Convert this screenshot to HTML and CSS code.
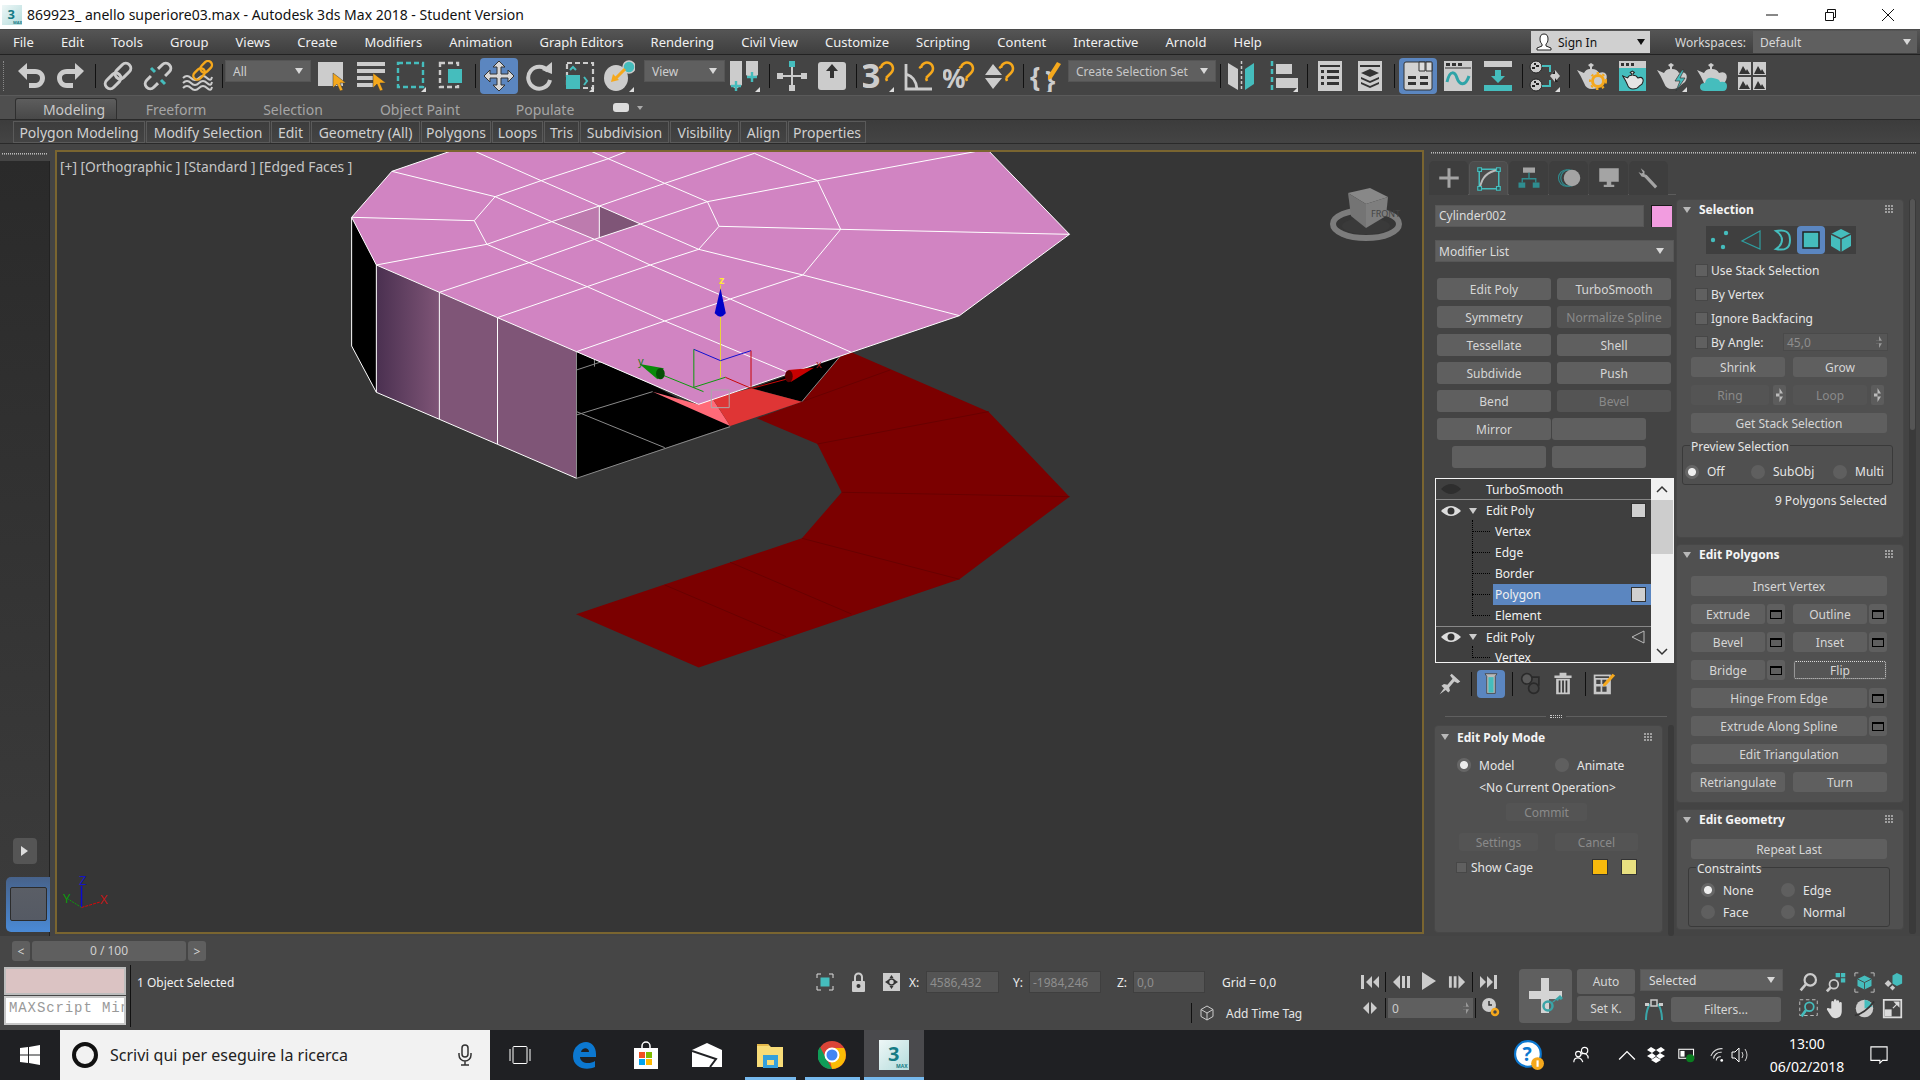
FILE: index.html
```html
<!DOCTYPE html>
<html lang="it">
<head>
<meta charset="utf-8">
<title>3ds Max 2018</title>
<link rel="stylesheet" href="styles.css">
</head>
<body>
<svg class="defs" aria-hidden="true"><defs>
<linearGradient id="maxg" x1="0" x2="1" y1="0" y2="1"><stop offset="0" stop-color="#eef7f7"/><stop offset="1" stop-color="#b4dcdc"/></linearGradient>
<symbol id="fly" viewBox="0 0 32 32"><path d="M31 32h-5l5-5z" fill="#ddd"/></symbol>
<symbol id="cur" viewBox="0 0 32 32"><path d="M18 13v15l4-4 3 7 3-1-3-7h6z" fill="#f5a81c" stroke="#3a3a3a" stroke-width=".5"/></symbol>
<symbol id="mag" viewBox="0 0 32 32"><path d="M18 8a6 6 0 1 1 10 5l-5 5M18 8l-2-1M23 18l1 3" fill="none" stroke="#f5a81c" stroke-width="2.5"/></symbol>
<symbol id="pot" viewBox="0 0 32 32"><path d="M1 10l7 3q2-4 6-4V7l-2-2 3-2 3 2-2 2v2q5 0 7 4 5-2 7 1t-1 8l-4 3q-3 4-9 4t-8-6Q5 16 1 10z" fill="#ccc"/></symbol>

<symbol id="undo" viewBox="0 0 32 32"><path d="M3 11l9-8v6h8c6 0 10 4 10 9s-4 10-10 10h-6v-5h6c3 0 5-2 5-5s-2-4-5-4h-8v6z" fill="#ccc"/></symbol>
<symbol id="redo" viewBox="0 0 32 32"><path transform="matrix(-1 0 0 1 32 0)" d="M3 11l9-8v6h8c6 0 10 4 10 9s-4 10-10 10h-6v-5h6c3 0 5-2 5-5s-2-4-5-4h-8v6z" fill="#ccc"/></symbol>
<symbol id="link" viewBox="0 0 32 32"><g transform="rotate(-45 16 16)" fill="none" stroke="#ccc" stroke-width="3"><rect x="0" y="11" width="18" height="10" rx="5"/><rect x="14" y="11" width="18" height="10" rx="5"/></g></symbol>
<symbol id="unlink" viewBox="0 0 32 32"><g transform="rotate(-45 16 16)" fill="none" stroke="#ccc" stroke-width="3"><path d="M11 11H5a5 5 0 000 10h6M21 11h6a5 5 0 010 10h-6"/></g><path d="M9 8l4 4M19 20l4 4" stroke="#45bdbd" stroke-width="3"/></symbol>
<symbol id="bind" viewBox="0 0 32 32"><g fill="none" stroke="#ccc" stroke-width="2"><path d="M1 18q4-4 8 0t8 0 8 0 5-1M1 23q4-4 8 0t8 0 8 0 5-1M1 28q4-4 8 0t8 0 8 0 5-1"/></g><g transform="rotate(-45 21 10)" fill="none" stroke="#f5a81c" stroke-width="2.4"><rect x="9" y="6" width="13" height="8" rx="4"/><rect x="19" y="6" width="13" height="8" rx="4"/></g></symbol>
<symbol id="select" viewBox="0 0 32 32"><rect x="3" y="2" width="25" height="24" fill="#ccc"/><use href="#cur"/></symbol>
<symbol id="byname" viewBox="0 0 32 32"><path d="M2 2h28v4H2zM2 9h28v4H2zM2 16h17v4H2zM2 23h17v4H2z" fill="#ccc"/><use href="#cur"/></symbol>
<symbol id="rect" viewBox="0 0 32 32"><rect x="3" y="3" width="25" height="24" fill="none" stroke="#45bdbd" stroke-width="2.4" stroke-dasharray="5 3"/><use href="#fly"/></symbol>
<symbol id="window" viewBox="0 0 32 32"><rect x="5" y="3" width="18" height="24" fill="none" stroke="#ccc" stroke-width="2.4" stroke-dasharray="5 3"/><rect x="13" y="9" width="14" height="14" fill="#45bdbd"/></symbol>
<symbol id="move" viewBox="0 0 32 32"><path d="M16 1l6 6h-4v7h7v-4l6 6-6 6v-4h-7v7h4l-6 6-6-6h4v-7H7v4l-6-6 6-6v4h7V7h-4z" fill="#d8d8d8" stroke="#333"/></symbol>
<symbol id="rotate" viewBox="0 0 32 32"><path d="M25 11A11 11 0 1 0 27 20" fill="none" stroke="#ccc" stroke-width="4"/><path d="M19 10L29 2v12z" fill="#ccc"/></symbol>
<symbol id="scale" viewBox="0 0 32 32"><rect x="4" y="3" width="26" height="25" fill="none" stroke="#ccc" stroke-width="2.2" stroke-dasharray="5 3"/><rect x="3" y="15" width="14" height="14" fill="#45bdbd"/><path d="M7 10l3-3 3 3M21 17l3 4-3 4" fill="none" stroke="#45bdbd" stroke-width="2"/><use href="#fly"/></symbol>
<symbol id="place" viewBox="0 0 32 32"><ellipse cx="13" cy="18" rx="12" ry="13" fill="#ccc"/><circle cx="26" cy="7" r="6" fill="#45bdbd" stroke="#ccc" stroke-width="1.5"/><path d="M22 9l-9 9" stroke="#f5a81c" stroke-width="3"/><path d="M8 22l2-8 6 6z" fill="#f5a81c"/><use href="#fly"/></symbol>
<symbol id="pivot" viewBox="0 0 32 32"><path d="M1 1h12v24l-6 4-6-4zM17 1h12v14l-6 4-6-4z" fill="#ccc"/><path d="M7 21v10M2 26h10M23 12v10M18 17h10" stroke="#45bdbd" stroke-width="2.4"/><use href="#fly"/></symbol>
<symbol id="manip" viewBox="0 0 32 32"><path d="M1 13h6v6H1zM25 13h6v6h-6zM13 25h6v6h-6z" fill="#ccc"/><rect x="13" y="1" width="6" height="6" fill="#45bdbd"/><path d="M7 16h18M16 7v18" stroke="#ccc" stroke-width="2"/></symbol>
<symbol id="kbd" viewBox="0 0 32 32"><rect x="2" y="2" width="28" height="28" rx="3" fill="#ccc"/><path d="M10 11l6-7 6 7h-4v7h-4v-7z" fill="#333"/></symbol>
<symbol id="snap3" viewBox="0 0 32 32"><text x="-2" y="28" class="gl gl-b">3</text><use href="#mag"/><use href="#fly"/></symbol>
<symbol id="angle" viewBox="0 0 32 32"><path d="M3 4v25h26M3 14q10 3 11 15" fill="none" stroke="#ccc" stroke-width="2.8"/><use href="#mag"/></symbol>
<symbol id="percent" viewBox="0 0 32 32"><text x="-1" y="28" class="gl gl-p">%</text><use href="#mag"/></symbol>
<symbol id="spinsnap" viewBox="0 0 32 32"><path d="M2 15L10 4l9 11zM2 18h17l-9 11z" fill="#ccc"/><use href="#mag"/></symbol>
<symbol id="named" viewBox="0 0 32 32"><text x="0" y="26" class="gl gl-b2">{</text><text x="15" y="30" class="gl gl-b2">}</text><path d="M27 2l4 2-9 14-4 2 0-4z" fill="#f5a81c"/></symbol>
<symbol id="mirror" viewBox="0 0 32 32"><path d="M1 3l10 6v21L1 24z" fill="#ccc"/><path d="M27 3l-9 6v21l9-6z" fill="#45bdbd"/><path d="M14.500 1v30" stroke="#ccc" stroke-width="1.500" stroke-dasharray="3 2"/></symbol>
<symbol id="align" viewBox="0 0 32 32"><path d="M5 1v30" stroke="#45bdbd" stroke-width="2.500" stroke-dasharray="5 3"/><path d="M9 4h16v10H9zM9 18h22v10H9z" fill="#ccc"/><use href="#fly"/></symbol>
<symbol id="layer" viewBox="0 0 32 32"><rect x="4" y="1" width="24" height="30" fill="#ccc"/><path d="M6 5h20v2H6zM7 10h3v3H7zM13 10h12v3H13zM7 16h3v3H7zM13 16h12v3H13zM7 22h3v3H7zM13 22h12v3H13z" fill="#333"/></symbol>
<symbol id="rstack" viewBox="0 0 32 32"><rect x="4" y="1" width="24" height="30" fill="#ccc"/><path d="M6 5h20v2H6zM16 9l9 4-9 4-9-4zM7 17l9 4 9-4v2l-9 4-9-4zM7 22l9 4 9-4v2l-9 4-9-4z" fill="#333"/></symbol>
<symbol id="ribbon" viewBox="0 0 32 32"><rect x="2" y="2" width="28" height="28" rx="2" fill="#d2d2d2" stroke="#333"/><path d="M17 2h6v9h-6zM24 2h6v9h-6z" fill="#ddd" stroke="#333"/><path d="M6 16h8v3H6zM18 16h8v3h-8zM6 22h8v3H6zM18 22h8v3h-8z" fill="#333"/></symbol>
<symbol id="curve" viewBox="0 0 32 32"><rect x="2" y="1" width="28" height="30" fill="#ccc"/><path d="M4 3h4v3H4zM10 3h4v3h-4zM16 3h4v3h-4z" fill="#333"/><path d="M3 8h26" stroke="#333"/><path d="M5 22c3-13 8-10 10-4s8 10 12-2" fill="none" stroke="#2fa4a8" stroke-width="3"/></symbol>
<symbol id="dope" viewBox="0 0 32 32"><path d="M2 1h28v6H2z" fill="#ccc"/><path d="M2 25h28v6H2zM13 10h6v6h4l-7 7-7-7h4z" fill="#45bdbd"/></symbol>
<symbol id="schem" viewBox="0 0 32 32"><circle cx="7" cy="7" r="6" fill="#ccc" stroke="#222"/><circle cx="7" cy="25" r="6" fill="#ccc" stroke="#222"/><path d="M5 3h2v2H5zM7 5h3v2H7zM3 7h3v2H3zM5 21h2v2H5zM7 23h3v2H7zM3 25h3v2H3z" fill="#222"/><path d="M13 6h8v6M13 26h8v-6" fill="none" stroke="#45bdbd" stroke-width="2"/><path d="M26 10l5 6-5 6-5-6z" fill="#ccc"/><path d="M26 10v4h-3zM26 18v4h3z" fill="#222"/><use href="#fly"/></symbol>
<symbol id="rsetup" viewBox="0 0 32 32"><use href="#pot"/><circle cx="22" cy="21" r="5.500" fill="none" stroke="#f5a81c" stroke-width="3"/><circle cx="22" cy="21" r="8" fill="none" stroke="#f5a81c" stroke-width="2" stroke-dasharray="2.500 3.500"/></symbol>
<symbol id="frame" viewBox="0 0 32 32"><rect x="3" y="1" width="27" height="30" fill="#45bdbd"/><path d="M3 1h27v7H3z" fill="#ccc"/><path d="M5 3h3v3H5zM10 3h3v3h-3zM15 3h3v3h-3z" fill="#333"/><svg x="6" y="9" width="22" height="22" viewBox="0 0 32 32"><path d="M1 10l7 3q2-4 6-4V7l-2-2 3-2 3 2-2 2v2q5 0 7 4 5-2 7 1t-1 8l-4 3q-3 4-9 4t-8-6Q5 16 1 10z" fill="#e4e4e4" stroke="#222" stroke-width="1.500"/></svg></symbol>
<symbol id="render" viewBox="0 0 32 32"><use href="#pot"/><path d="M26 10l-7 11h5l-4 10 9-13h-5l4-8z" fill="#45bdbd" stroke="#333" stroke-width=".7"/><use href="#fly"/></symbol>
<symbol id="cloud" viewBox="0 0 32 32"><use href="#pot"/><path d="M9 31q-5 0-5-4t5-4q1-6 8-5t7 4q7-1 7 4t-4 5z" fill="#45bdbd"/></symbol>
<symbol id="gallery" viewBox="0 0 32 32"><g fill="#ccc"><path d="M2 2h13v13H2zM17 2h13v13H17zM2 17h13v13H2zM17 17h13v13H17z"/></g><path d="M3 14l4-8 3 5 1-2 3 5zM18 14l4-8 3 5 1-2 3 5zM3 29l4-8 3 5 1-2 3 5zM18 29l4-8 3 5 1-2 3 5z" fill="#333"/></symbol>

<symbol id="t-plus" viewBox="0 0 32 32"><path d="M14 3h4v11h11v4H18v11h-4V18H3v-4h11z" fill="#a4a4a4"/></symbol>
<symbol id="t-mod" viewBox="0 0 32 32"><g fill="none" stroke="#45bdbd" stroke-width="2"><rect x="3" y="3" width="26" height="26"/><path d="M4 28C6 14 14 6 28 4" stroke="#bcbcbc" stroke-width="2.500"/></g><path d="M1 1h5v5H1zM26 1h5v5h-5zM1 26h5v5H1zM26 26h5v5h-5z" fill="#2b5a5a" stroke="#45bdbd" stroke-width="1.500"/></symbol>
<symbol id="t-hier" viewBox="0 0 32 32"><path d="M8 2h16v7H8z" fill="#a4a4a4"/><path d="M16 9v7M7 22v-5h18v5" fill="none" stroke="#2f8d90" stroke-width="1.800"/><path d="M2 22h9v7H2zM21 22h9v7h-9z" fill="#2f8d90"/></symbol>
<symbol id="t-mot" viewBox="0 0 32 32"><g fill="none" stroke="#2f8d90" stroke-width="1.500"><circle cx="13" cy="16" r="11"/><circle cx="16" cy="16" r="11"/></g><circle cx="20" cy="16" r="11" fill="#a4a4a4"/></symbol>
<symbol id="t-disp" viewBox="0 0 32 32"><path d="M3 3h26v18H3zM13 21h6v4h-6zM9 25h14v3H9z" fill="#a4a4a4"/></symbol>
<symbol id="t-util" viewBox="0 0 32 32"><path d="M5 3l5 4v4l3 1 14 15-3 3L10 15 6 14 2 8l4 2 2-1z" fill="#a4a4a4"/></symbol>

<symbol id="pin" viewBox="0 0 28 28"><path d="M16 2l10 9-3 2-4-2-6 7 1 4-2 2-8-8 3-2 4 1 6-7-3-4zM7 19l-5 7 7-5z" fill="#c8c8c8"/></symbol>
<symbol id="endres" viewBox="0 0 28 28"><path d="M7 2h14l-2 3v20h-10V5z" fill="#b9b9b9" stroke="#444"/><rect x="11" y="6" width="6" height="18" fill="#45bdbd"/></symbol>
<symbol id="uniq" viewBox="0 0 28 28"><g fill="none" stroke="#2a2a2a" stroke-width="2"><circle cx="8" cy="8" r="6"/><circle cx="16" cy="19" r="6"/><path d="M14 6h8v10"/></g><circle cx="8" cy="8" r="5" fill="#5a5a5a"/></symbol>
<symbol id="trash" viewBox="0 0 28 28"><path d="M4 4h20v3H4zM10 1h8v3h-8zM6 8h16v18H6z" fill="#c8c8c8"/><path d="M10 10v14M14 10v14M18 10v14" stroke="#333" stroke-width="2"/></symbol>
<symbol id="cfg" viewBox="0 0 28 28"><path d="M2 3h20v23H2z" fill="#c8c8c8"/><path d="M4 5h16v2H4zM5 9h5v5H5zM12 9h5v5h-5zM5 17h5v6H5zM12 17h5v6h-5z" fill="#444"/><path d="M24 2l3 2-11 12-3 1 0-3z" fill="#f5a81c"/></symbol>

<symbol id="lv-v" viewBox="0 0 28 28"><circle cx="6" cy="14" r="2.200" fill="#45bdbd"/><circle cx="19" cy="7" r="2.200" fill="#45bdbd"/><circle cx="16" cy="21" r="2.200" fill="#45bdbd"/></symbol>
<symbol id="lv-e" viewBox="0 0 28 28"><path d="M23 5v18L5 15z" fill="none" stroke="#2f9ea0" stroke-width="1.200"/></symbol>
<symbol id="lv-b" viewBox="0 0 28 28"><path d="M9 5q14-3 14 9t-14 9q6-4 6-9t-6-9z" fill="none" stroke="#45bdbd" stroke-width="2"/></symbol>
<symbol id="lv-p" viewBox="0 0 28 28"><rect x="6" y="6" width="16" height="16" fill="#45bdbd" stroke="#222" stroke-width="1.500"/></symbol>
<symbol id="lv-el" viewBox="0 0 28 28"><path d="M14 3l10 5v12l-10 6-10-6V8z" fill="#45bdbd"/><path d="M4 8l10 5 10-5M14 13v13" fill="none" stroke="#444" stroke-width="1.500"/></symbol>
</defs></svg>

<div class="app">
  <header class="titlebar">
    <svg class="logo" viewBox="0 0 20 20"><rect width="20" height="20" fill="url(#maxg)"/><text x="5.500" y="13.500" class="logo-n">3</text><text x="11" y="19" class="logo-m">MAX</text></svg>
    <span class="title">869923_ anello superiore03.max - Autodesk 3ds Max 2018 - Student Version</span>
    <div class="winbtns">
      <svg class="wb" viewBox="0 0 14 14"><path d="M1 7h12" stroke="#111"/></svg>
      <svg class="wb" viewBox="0 0 14 14"><path d="M2.500 4.500h8v8h-8zM4.500 4V1.500h8v8H11" fill="none" stroke="#111"/></svg>
      <svg class="wb wb-last" viewBox="0 0 14 14"><path d="M1 1l12 12M13 1L1 13" stroke="#111"/></svg>
    </div>
  </header>

  <nav class="menubar">
    <span>File</span><span>Edit</span><span>Tools</span><span>Group</span><span>Views</span><span>Create</span><span>Modifiers</span><span>Animation</span><span>Graph Editors</span><span>Rendering</span><span>Civil View</span><span>Customize</span><span>Scripting</span><span>Content</span><span>Interactive</span><span>Arnold</span><span>Help</span>
    <div class="menu-right">
      <div class="signin"><svg class="signin-i" viewBox="0 0 16 18"><path d="M8 1c3 0 4 2 4 5s-1 4-2 5v2l5 2v2H1v-2l5-2v-2C5 10 4 9 4 6s1-5 4-5z" fill="#fff" stroke="#222"/></svg><span class="signin-t">Sign In</span><i class="tri tri-dark"></i></div>
      <span class="ws-label">Workspaces:</span>
      <div class="ws-drop"><span>Default</span><i class="tri"></i></div>
    </div>
  </nav>

  <div class="toolbar">
    <i class="grip"></i>
    <span class="ti"><svg class="ic"><use href="#undo"/></svg></span>
    <span class="ti"><svg class="ic"><use href="#redo"/></svg></span>
    <i class="sep"></i>
    <span class="ti"><svg class="ic"><use href="#link"/></svg></span>
    <span class="ti"><svg class="ic"><use href="#unlink"/></svg></span>
    <span class="ti"><svg class="ic"><use href="#bind"/></svg></span>
    <i class="sep"></i>
    <div class="tdrop td-all"><span>All</span><i class="tri"></i></div>
    <span class="ti"><svg class="ic"><use href="#select"/></svg></span>
    <span class="ti"><svg class="ic"><use href="#byname"/></svg></span>
    <span class="ti"><svg class="ic"><use href="#rect"/></svg></span>
    <span class="ti"><svg class="ic"><use href="#window"/></svg></span>
    <i class="sep"></i>
    <span class="ti ti-on"><svg class="ic"><use href="#move"/></svg></span>
    <span class="ti"><svg class="ic"><use href="#rotate"/></svg></span>
    <span class="ti"><svg class="ic"><use href="#scale"/></svg></span>
    <span class="ti"><svg class="ic"><use href="#place"/></svg></span>
    <div class="tdrop td-view"><span>View</span><i class="tri"></i></div>
    <span class="ti"><svg class="ic"><use href="#pivot"/></svg></span>
    <i class="sep"></i>
    <span class="ti"><svg class="ic"><use href="#manip"/></svg></span>
    <span class="ti"><svg class="ic"><use href="#kbd"/></svg></span>
    <i class="sep"></i>
    <span class="ti"><svg class="ic"><use href="#snap3"/></svg></span>
    <span class="ti"><svg class="ic"><use href="#angle"/></svg></span>
    <span class="ti"><svg class="ic"><use href="#percent"/></svg></span>
    <span class="ti"><svg class="ic"><use href="#spinsnap"/></svg></span>
    <i class="sep"></i>
    <span class="ti"><svg class="ic"><use href="#named"/></svg></span>
    <div class="tdrop td-set"><span>Create Selection Set</span><i class="tri"></i></div>
    <i class="sep"></i>
    <span class="ti"><svg class="ic"><use href="#mirror"/></svg></span>
    <span class="ti"><svg class="ic"><use href="#align"/></svg></span>
    <i class="sep"></i>
    <span class="ti"><svg class="ic"><use href="#layer"/></svg></span>
    <span class="ti"><svg class="ic"><use href="#rstack"/></svg></span>
    <i class="sep"></i>
    <span class="ti ti-on"><svg class="ic"><use href="#ribbon"/></svg></span>
    <span class="ti"><svg class="ic"><use href="#curve"/></svg></span>
    <span class="ti"><svg class="ic"><use href="#dope"/></svg></span>
    <i class="sep"></i>
    <span class="ti"><svg class="ic"><use href="#schem"/></svg></span>
    <i class="sep"></i>
    <span class="ti"><svg class="ic"><use href="#rsetup"/></svg></span>
    <span class="ti"><svg class="ic"><use href="#frame"/></svg></span>
    <span class="ti"><svg class="ic"><use href="#render"/></svg></span>
    <span class="ti"><svg class="ic"><use href="#cloud"/></svg></span>
    <span class="ti"><svg class="ic"><use href="#gallery"/></svg></span>
  </div>

  <div class="rtabs">
    <span class="rtab rtab-on">Modeling</span>
    <span class="rtab rt-1">Freeform</span>
    <span class="rtab rt-2">Selection</span>
    <span class="rtab rt-3">Object Paint</span>
    <span class="rtab rt-4">Populate</span>
    <i class="rt-pill"></i><i class="rt-caret"></i>
  </div>
  <div class="rgroups">
    <span>Polygon Modeling</span><span>Modify Selection</span><span>Edit</span><span>Geometry (All)</span><span>Polygons</span><span>Loops</span><span>Tris</span><span>Subdivision</span><span>Visibility</span><span>Align</span><span>Properties</span>
  </div>

  <main class="main">
    <aside class="leftbar">
      <i class="lb-dots"></i>
      <div class="lb-body">
        <div class="lb-play"><i class="lb-arrow"></i></div>
        <div class="lb-slot"><i class="lb-inner"></i></div>
      </div>
    </aside>

    <section class="vp">
      <svg class="scene" viewBox="57 152 1365 780">
        <defs>
          <linearGradient id="wall" x1="0" x2="1" y1="0" y2="0"><stop offset="0" stop-color="#4a3050"/><stop offset="1" stop-color="#7f5577"/></linearGradient>
        </defs>
        <g transform="translate(340 150) scale(.4847 .3333)">
          <polygon points="1055,607 1338,785 1505,1040 1278,1288 740,1553 487,1393 953,1165 1035,1027 985,882 860,805 953,755 1030,622" fill="#7b0000"/>
          <g class="dk"><path d="M953 755L1135 660M985 882L1338 785M1035 1027L1505 1040M953 1165L1278 1288M805 1237L1055 1392M670 1305L920 1460"/></g>

          <polygon points="24,202 75,345 75,727 24,588" fill="#000"/>
          <polygon points="75,345 205,427 205,808 75,727" fill="url(#wall)"/>
          <polygon points="205,427 325,503 325,883 205,808" fill="#7f5577"/>
          <polygon points="325,503 488,605 488,985 325,883" fill="#7f5577"/>
          <g class="wl"><path d="M24 202V588L75 727V345M75 727L205 808 325 883 488 985V605M205 427V808M325 503V883"/></g>

          <polygon points="488,605 645,705 805,828 488,985" fill="#000"/>
          <polygon points="850,715 1030,622 953,755" fill="#000"/>
          <g class="gl-line"><path d="M488 985L805 830M488 795L645 725M488 785L670 893M488 660L540 635M525 625V650M1030 622L953 755"/></g>
          <polygon points="645,725 738,763 768,745 805,828" fill="#ff6a78"/>
          <polygon points="768,745 848,715 953,755 805,828" fill="#df3535"/>

          <polygon points="24,202 107,64 225,5 1340,5 1505,253 1278,497 1055,607 740,763 488,605 325,503 205,427 75,345" fill="#d184c2"/>
          <polygon points="437,215 535,168 535,263 525,268" fill="#bd7bae"/>
          <polygon points="535,168 620,222 535,263" fill="#7f5577"/>
          <g class="wl">
            <path d="M24 202L107 64 225 5M1340 5L1505 253 1278 497 1055 607 740 763 488 605 325 503 205 427 75 345 24 202"/>
            <path d="M107 64L320 140M25 202L277 212M75 345L303 283M1505 253L1033 238 782 229M1278 497L955 375 740 298M1310 5L985 92 758 155"/>
            <path d="M320 140L277 212 303 283M758 155L782 229 740 298M985 92L1033 238 955 375"/>
            <path d="M320 140L415 92 550 28 590 5M303 283L437 215 535 168 670 100 855 10M205 427L390 338 525 268 620 222 758 155M325 503L510 410 640 345 740 298M488 605L670 513 805 447 955 375"/>
            <path d="M280 5L415 92 535 168 620 222 740 298M320 140L437 215 525 268 640 345 805 447 1055 607M303 283L390 338 510 410 670 513 920 665M520 5L670 100 758 155M855 10L985 92M535 168V263"/>
          </g>

          <g class="gz">
            <path class="gz-y" d="M785 405V682"/>
            <path class="gz-b" d="M730 598L785 632 848 602"/>
            <path class="gz-g" d="M730 598V712L795 682M665 675L750 725"/>
            <path class="gz-r" d="M848 602V715L795 682M850 715L920 688"/>
            <rect class="gz-s" x="766" y="720" width="37" height="53"/>
          </g>
          <path d="M785 415L796 490Q785 510 773 490z" fill="#0000c8"/>
          <path d="M618 642L668 655 655 688z" fill="#0a8a0a"/>
          <ellipse cx="661" cy="671" rx="9" ry="17" fill="#064f06"/>
          <path d="M978 653L925 660 930 696z" fill="#c80000"/>
          <ellipse cx="926" cy="679" rx="8" ry="18" fill="#5a0000"/>
        </g>
        <text x="719" y="284" class="ax ax-z">z</text>
        <text x="638" y="365" class="ax ax-ty">y</text>
        <text x="816" y="368" class="ax ax-tx">x</text>

        <g class="tri-ax">
          <path class="ta-b" d="M81.500 907.500V886"/>
          <path class="ta-g" d="M81.500 907.500L68 899"/>
          <path class="ta-r" d="M81.500 907.500L100 902"/>
          <text x="79" y="885" class="ax ta-tz">Z</text>
          <text x="63" y="903" class="ax ta-ty">Y</text>
          <text x="100" y="904" class="ax ta-tx">X</text>
        </g>

        <ellipse cx="1366" cy="224" rx="33" ry="14" fill="none" stroke="#7c7c7c" stroke-width="6"/>
        <ellipse cx="1366" cy="226" rx="24" ry="8" fill="#3a3a3a"/>
        <polygon points="1348,193 1370,188 1388,197 1366,204" fill="#888"/>
        <polygon points="1348,193 1366,204 1366,228 1351,216" fill="#747474"/>
        <polygon points="1366,204 1388,197 1386,216 1366,228" fill="#7e7e7e"/>
        <text x="1371" y="217" class="vc-t">FRONT</text>
      </svg>
      <div class="vp-label">[+] [Orthographic ] [Standard ] [Edged Faces ]</div>
    </section>

    <aside class="cmd">
      <i class="dotline"></i>
      <div class="cmd-row">
        <div class="cmd-left">
          <div class="tabs">
            <span class="tab"><svg class="tab-i"><use href="#t-plus"/></svg></span>
            <span class="tab tab-on"><svg class="tab-i"><use href="#t-mod"/></svg></span>
            <span class="tab"><svg class="tab-i"><use href="#t-hier"/></svg></span>
            <span class="tab"><svg class="tab-i"><use href="#t-mot"/></svg></span>
            <span class="tab"><svg class="tab-i"><use href="#t-disp"/></svg></span>
            <span class="tab"><svg class="tab-i"><use href="#t-util"/></svg></span>
          </div>
          <div class="cl-in">
            <div class="name-row"><div class="field name">Cylinder002</div><i class="swatch"></i></div>
            <div class="field modlist"><span>Modifier List</span><i class="tri"></i></div>
            <div class="mods">
              <div class="mrow"><button class="b b-m">Edit Poly</button><button class="b b-m">TurboSmooth</button></div>
              <div class="mrow"><button class="b b-m">Symmetry</button><button class="b b-m off">Normalize Spline</button></div>
              <div class="mrow"><button class="b b-m">Tessellate</button><button class="b b-m">Shell</button></div>
              <div class="mrow"><button class="b b-m">Subdivide</button><button class="b b-m">Push</button></div>
              <div class="mrow"><button class="b b-m">Bend</button><button class="b b-m off">Bevel</button></div>
              <div class="mrow mrow-6"><button class="b b-m">Mirror</button><button class="b b-e"></button></div>
              <div class="mrow mrow-7"><button class="b b-e"></button><button class="b b-e"></button></div>
            </div>
            <div class="stack">
              <div class="st-list">
                <div class="st-top"><svg class="eye" viewBox="0 0 20 12"><path d="M0 6q10-10 20 0-10 10-20 0z" fill="#2e2e2e"/></svg><span class="st-name">TurboSmooth</span></div>
                <div class="st-head"><svg class="eye" viewBox="0 0 20 12"><path d="M0 6q10-10 20 0-10 10-20 0z" fill="#ddd"/><circle cx="10" cy="6" r="3.500" fill="#333"/></svg><i class="st-tri"></i><span class="st-lab">Edit Poly</span><i class="st-box"></i></div>
                <div class="subs">
                  <div class="sub"><span>Vertex</span></div>
                  <div class="sub"><span>Edge</span></div>
                  <div class="sub"><span>Border</span></div>
                  <div class="sub"><span class="st-sel">Polygon<i class="st-box"></i></span></div>
                  <div class="sub"><span>Element</span></div>
                </div>
                <div class="st-head st-line"><svg class="eye" viewBox="0 0 20 12"><path d="M0 6q10-10 20 0-10 10-20 0z" fill="#ddd"/><circle cx="10" cy="6" r="3.500" fill="#333"/></svg><i class="st-tri"></i><span class="st-lab">Edit Poly</span><svg class="st-sub" viewBox="0 0 14 14"><path d="M13 1v12L1 7z" fill="none" stroke="#bbb"/></svg></div>
                <div class="subs"><div class="sub"><span>Vertex</span></div></div>
              </div>
              <div class="st-scroll">
                <svg class="st-ar" viewBox="0 0 22 21"><path d="M6 13l5-5 5 5" fill="none" stroke="#333" stroke-width="1.500"/></svg>
                <i class="st-thumb"></i>
                <svg class="st-ar st-ar-b" viewBox="0 0 22 21"><path d="M6 8l5 5 5-5" fill="none" stroke="#333" stroke-width="1.500"/></svg>
              </div>
            </div>
            <div class="stools">
              <svg class="sti st-pin"><use href="#pin"/></svg><i class="sep st-s1"></i>
              <span class="sti-on"><svg class="sti"><use href="#endres"/></svg></span><i class="sep st-s2"></i>
              <svg class="sti st-uni"><use href="#uniq"/></svg>
              <svg class="sti st-tr"><use href="#trash"/></svg><i class="sep st-s3"></i>
              <svg class="sti st-cfg"><use href="#cfg"/></svg>
            </div>
            <div class="divider"><i></i><b></b><i></i></div>
          </div>
          <div class="epm-row">
            <section class="roll epm">
              <div class="rhead"><i class="rtri"></i><span>Edit Poly Mode</span><i class="rgrip"></i></div>
              <div class="radios epm-r"><label class="rad rad-on">Model</label><label class="rad">Animate</label></div>
              <div class="nocur">&lt;No Current Operation&gt;</div>
              <button class="b off b-commit">Commit</button>
              <div class="epm-b"><button class="b off b-set">Settings</button><button class="b off b-can">Cancel</button></div>
              <div class="cage"><i class="cb cb-s"></i><span>Show Cage</span><i class="sw sw-1"></i><i class="sw sw-2"></i></div>
            </section>
            <i class="track"></i>
          </div>
        </div>

        <div class="cmd-right">
          <div class="rolls">
            <section class="roll r-sel">
              <div class="rhead"><i class="rtri"></i><span>Selection</span><i class="rgrip"></i></div>
              <div class="levels">
                <svg class="lv"><use href="#lv-v"/></svg><svg class="lv"><use href="#lv-e"/></svg><svg class="lv"><use href="#lv-b"/></svg>
                <span class="lv-on"><svg class="lv"><use href="#lv-p"/></svg></span><svg class="lv"><use href="#lv-el"/></svg>
              </div>
              <div class="checks">
                <div class="chk"><i class="cb"></i><span>Use Stack Selection</span></div>
                <div class="chk"><i class="cb"></i><span>By Vertex</span></div>
                <div class="chk"><i class="cb"></i><span>Ignore Backfacing</span></div>
                <div class="chk"><i class="cb"></i><span>By Angle:</span><div class="spin"><span>45,0</span><i class="spin-a"></i></div></div>
              </div>
              <div class="btns btns-s">
                <div class="br"><button class="b fl">Shrink</button><button class="b fl">Grow</button></div>
                <div class="br"><button class="b off b-ring">Ring</button><i class="mini"></i><button class="b off b-loop">Loop</button><i class="mini"></i></div>
                <button class="b bw">Get Stack Selection</button>
              </div>
              <div class="group g-prev"><span class="legend">Preview Selection</span>
                <div class="radios prev-r"><label class="rad rad-on">Off</label><label class="rad">SubObj</label><label class="rad">Multi</label></div>
              </div>
              <div class="count">9 Polygons Selected</div>
            </section>

            <section class="roll r-pol">
              <div class="rhead"><i class="rtri"></i><span>Edit Polygons</span><i class="rgrip"></i></div>
              <div class="btns btns-p">
                <button class="b bw">Insert Vertex</button>
                <div class="br"><button class="b b-h">Extrude</button><button class="b sq"><i></i></button><button class="b b-h">Outline</button><button class="b sq"><i></i></button></div>
                <div class="br"><button class="b b-h">Bevel</button><button class="b sq"><i></i></button><button class="b b-h">Inset</button><button class="b sq"><i></i></button></div>
                <div class="br"><button class="b b-h">Bridge</button><button class="b sq"><i></i></button><button class="b fl b-flip">Flip</button></div>
                <div class="br br-t"><button class="b fl">Hinge From Edge</button><button class="b sq"><i></i></button></div>
                <div class="br br-t"><button class="b fl">Extrude Along Spline</button><button class="b sq"><i></i></button></div>
                <button class="b bw">Edit Triangulation</button>
                <div class="br"><button class="b fl">Retriangulate</button><button class="b fl">Turn</button></div>
              </div>
            </section>

            <section class="roll r-geo">
              <div class="rhead"><i class="rtri"></i><span>Edit Geometry</span><i class="rgrip"></i></div>
              <button class="b bw b-rep">Repeat Last</button>
              <div class="group g-con"><span class="legend">Constraints</span>
                <div class="radios con-r"><label class="rad rad-on">None</label><label class="rad">Edge</label></div>
                <div class="radios con-r"><label class="rad">Face</label><label class="rad">Normal</label></div>
              </div>
            </section>
          </div>
          <div class="track track-r"><i class="thumb"></i></div>
        </div>
      </div>
    </aside>
  </main>

  <footer class="bottom">
    <div class="b-left">
      <div class="slider"><button class="b sl-b">&lt;</button><div class="sl-t">0 / 100</div><button class="b sl-b">&gt;</button></div>
      <div class="listener">
        <div class="ls-col"><div class="ls-pink"></div><div class="ls-white">MAXScript Mini</div></div>
        <i class="ls-sep"></i>
        <span class="status">1 Object Selected</span>
      </div>
    </div>
    <div class="b-coords">
      <div class="co-row">
        <svg class="co-i1" viewBox="0 0 18 18"><path d="M1 5V1h4M13 1h4v4M17 13v4h-4M5 17H1v-4" fill="none" stroke="#ddd"/><rect x="4.500" y="4.500" width="9" height="9" fill="#45bdbd"/></svg>
        <svg class="co-i2" viewBox="0 0 15 20"><path d="M4 9V5a3.500 3.500 0 017 0v4" fill="none" stroke="#ccc" stroke-width="2"/><rect x="1" y="9" width="13" height="11" rx="1" fill="#ccc"/><circle cx="7.500" cy="14" r="2" fill="#333"/></svg>
        <svg class="co-i3" viewBox="0 0 17 18"><rect width="17" height="18" fill="#ccc"/><path d="M8.500 2l2 3h-4zM8.500 16l2-3h-4zM2 9l3-2v4zM15 9l-3-2v4z" fill="#333"/><circle cx="8.500" cy="9" r="3" fill="none" stroke="#333" stroke-width="1.500"/></svg>
        <span class="co-l co-x">X:</span><div class="co-f co-f1">4586,432</div>
        <span class="co-l co-y">Y:</span><div class="co-f">-1984,246</div>
        <span class="co-l co-z">Z:</span><div class="co-f">0,0</div>
        <span class="grid">Grid = 0,0</span>
      </div>
      <div class="tag-row">
        <i class="tag-sep"></i>
        <svg class="tag-i" viewBox="0 0 16 16"><path d="M8 1l6 3.500v7L8 15l-6-3.500v-7zM2 4.500L8 8l6-3.500M8 8v7" fill="none" stroke="#ccc"/></svg>
        <span>Add Time Tag</span>
      </div>
    </div>
    <div class="b-play">
      <div class="pl-row">
        <svg class="pl-1" viewBox="0 0 20 16"><path d="M1 1h3v14H1zM12 2v12L6 8zM19 2v12l-6-6z" fill="#ccc"/></svg>
        <i class="pl-sep pl-s1"></i>
        <svg class="pl-2" viewBox="0 0 19 16"><path d="M8 1v14L1 8zM10 2h3v12h-3zM15 2h3v12h-3z" fill="#ccc"/></svg>
        <svg class="pl-3" viewBox="0 0 16 22"><path d="M1 1l14 9-14 9z" fill="#ccc"/></svg>
        <svg class="pl-4" viewBox="0 0 19 16"><path d="M1 2h3v12H1zM6 2h3v12H6zM11 1v14l7-7z" fill="#ccc"/></svg>
        <i class="pl-sep pl-s2"></i>
        <svg class="pl-5" viewBox="0 0 18 16"><path d="M1 2v12l6-6zM8 2v12l6-6zM15 1h3v14h-3z" fill="#ccc"/></svg>
      </div>
      <div class="pl-row2">
        <svg class="pl-a" viewBox="0 0 16 14"><path d="M7 1v12L1 7zM9 1v12l6-6z" fill="#ccc"/></svg>
        <i class="pl-sep pl-s3"></i>
        <div class="pl-f"><span>0</span><i class="spin-a"></i></div>
        <i class="pl-sep pl-s4"></i>
        <svg class="pl-t" viewBox="0 0 18 20"><circle cx="7" cy="7" r="7" fill="#ccc"/><path d="M7 3v4h3" fill="none" stroke="#333" stroke-width="1.500"/><circle cx="13" cy="14" r="3" fill="none" stroke="#f5a81c" stroke-width="2.500"/></svg>
      </div>
    </div>
    <div class="b-key"><svg class="key-i" viewBox="0 0 36 38"><path d="M13 1h8v13h13v8H21v14h-8V22H1v-8h12z" fill="#d4d4d4"/><circle cx="20" cy="29" r="4.500" fill="none" stroke="#3aa5a8" stroke-width="2.500"/><path d="M23 26l9-8 3 3-2 2-2-1-1 2-2-1-2 2" fill="#3aa5a8"/></svg></div>
    <div class="b-auto"><button class="b">Auto</button><button class="b">Set K.</button></div>
    <div class="b-sel">
      <div class="field sel-d"><span>Selected</span><i class="tri"></i></div>
      <div class="sel-r">
        <svg class="sel-i" viewBox="0 0 24 24"><path d="M4 22C4 12 8 6 8 6M20 22c0-10-4-16-4-16" fill="none" stroke="#3aa5a8" stroke-width="2"/><rect x="9" y="2" width="6" height="6" fill="none" stroke="#ccc" stroke-width="1.500"/><path d="M3 5h4v3H3zM17 5h4v3h-4z" fill="#ccc"/></svg>
        <button class="b b-fil">Filters...</button>
      </div>
    </div>
    <div class="b-nav">
      <svg class="nv" viewBox="0 0 24 24"><circle cx="14" cy="9" r="6.500" fill="none" stroke="#ccc" stroke-width="2.500"/><path d="M9 14l-6 7" stroke="#ccc" stroke-width="3"/></svg>
      <svg class="nv" viewBox="0 0 24 24"><circle cx="9" cy="14" r="5" fill="none" stroke="#ccc" stroke-width="2"/><path d="M5 18l-4 4" stroke="#ccc" stroke-width="3"/><path d="M11 1h5v5h-5zM17 1h5v5h-5zM17 7h5v5h-5z" fill="#45bdbd"/></svg>
      <svg class="nv" viewBox="0 0 24 24"><path d="M1 5V1h4M19 1h4v4M23 19v4h-4M5 23H1v-4" fill="none" stroke="#ccc"/><path d="M12 4l8 4v8l-8 4-8-4V8z" fill="#45bdbd"/><path d="M4 8l8 4 8-4M12 12v8" fill="none" stroke="#444"/></svg>
      <svg class="nv" viewBox="0 0 24 24"><path d="M17 1l6 3v9l-6 3-5-3V4z" fill="#45bdbd"/><path d="M7 9l4 4-4 4-4-4zM12 15l3 3-3 3-3-3z" fill="#ccc"/></svg>
      <svg class="nv" viewBox="0 0 24 24"><rect x="2" y="2" width="20" height="18" fill="none" stroke="#ccc" stroke-dasharray="4 3"/><circle cx="13" cy="10" r="5" fill="none" stroke="#45bdbd" stroke-width="2"/><path d="M9 14l-5 7" stroke="#45bdbd" stroke-width="3"/></svg>
      <svg class="nv" viewBox="0 0 24 24"><path d="M6 12V5a1.500 1.500 0 013 0v-2a1.500 1.500 0 013 0v1a1.500 1.500 0 013 0v2a1.500 1.500 0 013 0v9c0 5-3 8-7 8s-5-2-7-5l-3-5c0-2 2-2 3-1z" fill="#ddd"/></svg>
      <svg class="nv" viewBox="0 0 24 24"><circle cx="12" cy="12" r="10" fill="#ccc"/><path d="M12 2a10 10 0 019 8l-9 2z" fill="#45bdbd"/><path d="M1 20Q12 18 23 4" fill="none" stroke="#333" stroke-width="2"/></svg>
      <svg class="nv" viewBox="0 0 24 24"><path d="M2 2h20v20H2z" fill="none" stroke="#ddd" stroke-width="2"/><path d="M3 13h8v8H3z" fill="#ddd"/><path d="M20 4v7l-3-3-4 4-1-1 4-4-3-3z" fill="#ddd"/></svg>
    </div>
  </footer>

  <div class="taskbar">
    <span class="tk-start"><svg class="win" viewBox="0 0 20 20"><path d="M0 3l8-1v7.500H0zM9 2l11-2v9.500H9zM0 10.500h8V18l-8-1zM9 10.500h11V20l-11-2z" fill="#fff"/></svg></span>
    <div class="tk-search">
      <i class="cortana"></i>
      <span>Scrivi qui per eseguire la ricerca</span>
      <svg class="mic" viewBox="0 0 14 22"><rect x="4" y="1" width="6" height="12" rx="3" fill="none" stroke="#333" stroke-width="1.500"/><path d="M1 9v2a6 6 0 0012 0V9M7 17v4M3 21h8" fill="none" stroke="#333" stroke-width="1.500"/></svg>
    </div>
    <span class="tk tk-w60"><svg class="tk-i tk-view" viewBox="0 0 24 18"><rect x="5" y=".5" width="14" height="17" rx="1" fill="none" stroke="#fff"/><path d="M2 3v12M22 3v12" stroke="#fff"/></svg></span>
    <span class="tk tk-w68"><svg class="tk-i" viewBox="0 0 26 28"><path d="M2 15C2 6 9 1 15 1c6 0 10 5 10 12v3H9c0 6 9 8 15 4v6c-9 4-22 1-22-11zm8-4h8c0-5-7-5-8 0z" fill="#0c78d0"/></svg></span>
    <span class="tk tk-w56"><svg class="tk-i" viewBox="0 0 24 28"><path d="M8 8V5a4 4 0 018 0v3" fill="none" stroke="#fff" stroke-width="1.500"/><rect y="7" width="24" height="21" fill="#fff"/><path d="M5 11h6v6H5z" fill="#f25022"/><path d="M12 11h6v6h-6z" fill="#7fba00"/><path d="M5 18h6v6H5z" fill="#00a4ef"/><path d="M12 18h6v6h-6z" fill="#ffb900"/></svg></span>
    <span class="tk tk-w66"><svg class="tk-i tk-mail" viewBox="0 0 30 24"><path d="M0 7l15-7 15 7v17H0z" fill="#fff"/><path d="M0 8l24 8-6 8" fill="none" stroke="#202124" stroke-width="2"/></svg></span>
    <span class="tk tk-w60 tk-run"><svg class="tk-i" viewBox="0 0 28 26"><path d="M1 2h11l3 3h12v20H1z" fill="#f8dc78"/><path d="M1 2h11l1 2H1z" fill="#e4b84a"/><rect x="7" y="13" width="15" height="13" fill="#34a0dc"/><rect x="11" y="18" width="7" height="5" fill="#f8dc78"/></svg></span>
    <span class="tk tk-w64 tk-run"><svg class="tk-i" viewBox="0 0 28 28"><circle cx="14" cy="14" r="14" fill="#db4437"/><path d="M14 28a14 14 0 0012-21H14l-3 8z" fill="#fbbc05"/><path d="M2 6l7 13 5 9A14 14 0 012 6z" fill="#0f9d58"/><circle cx="14" cy="14" r="6.500" fill="#4285f4" stroke="#fff" stroke-width="2"/></svg></span>
    <span class="tk tk-w60 tk-run tk-act"><svg class="tk-i tk-max" viewBox="0 0 30 30"><rect width="30" height="30" fill="url(#maxg)"/><text x="9" y="21" class="logo-n2">3</text><text x="17" y="28" class="logo-m2">MAX</text></svg></span>
    <div class="tray">
      <span class="tr tr-48"><svg class="tr-i tr-help" viewBox="0 0 28 28"><circle cx="13" cy="13" r="12" fill="#fff" stroke="#0c78d0" stroke-width="2"/><text x="8" y="20" class="help-q">?</text><circle cx="22" cy="22" r="6" fill="#f5a81c"/><path d="M22 19v6" stroke="#fff" stroke-width="2"/></svg></span>
      <span class="tr tr-56"><svg class="tr-i" viewBox="0 0 20 20"><circle cx="14" cy="5" r="3.500" fill="none" stroke="#fff" stroke-width="1.300"/><circle cx="7" cy="9" r="3" fill="none" stroke="#fff" stroke-width="1.300"/><path d="M2 18c0-6 8-7 10 0M10 9c4-2 8 0 8 5" fill="none" stroke="#fff" stroke-width="1.300"/></svg></span>
      <span class="tr tr-36"><svg class="tr-i" viewBox="0 0 16 10"><path d="M1 9l7-7 7 7" fill="none" stroke="#fff" stroke-width="1.200"/></svg></span>
      <span class="tr tr-22"><svg class="tr-i" viewBox="0 0 18 18"><path d="M4 1l5 3-4 3-5-3zM14 1l4 3-5 3-4-3zM5 7l4 3-4 3-5-3zM13 7l5 3-5 3-4-3zM4 14l5-3 5 3-5 3z" fill="#fff"/></svg></span>
      <span class="tr tr-40"><svg class="tr-i" viewBox="0 0 22 20"><rect x="1" y="3" width="18" height="11" fill="none" stroke="#fff" stroke-width="1.300"/><rect x="3" y="5" width="5" height="7" fill="#fff"/><circle cx="15" cy="14" r="5" fill="#0a7d20"/></svg></span>
      <span class="tr tr-24"><svg class="tr-i" viewBox="0 0 20 18"><path d="M1 10a12 12 0 0113-8M4 13a8 8 0 019-7M7 15a4 4 0 015-4" fill="none" stroke="#ddd" stroke-width="1.200"/><circle cx="13" cy="15" r="1.500" fill="#fff"/></svg></span>
      <span class="tr tr-18"><svg class="tr-i" viewBox="0 0 18 18"><path d="M1 6h3l4-4v14l-4-4H1z" fill="none" stroke="#fff"/><path d="M11 6q2 3 0 6M14 3q4 6 0 12" fill="none" stroke="#ccc"/></svg></span>
      <div class="clock"><span>13:00</span><span>06/02/2018</span></div>
      <span class="tr tr-28"><svg class="tr-i" viewBox="0 0 20 20"><path d="M1 1h18v15h-5l-3 3v-3H1z" fill="none" stroke="#fff" stroke-width="1.200"/></svg></span>
    </div>
  </div>
</div>
</body>
</html>
```

FILE: styles.css
```css
* { box-sizing: border-box; }
html, body { margin: 0; padding: 0; }
body { width: 1920px; height: 1080px; overflow: hidden; background: #444; font: 12px "Noto Sans", "Open Sans", sans-serif; color: #e2e2e2; }
.defs { position: absolute; width: 0; height: 0; }
i { display: block; flex: none; }
svg { display: block; flex: none; }
button { font: inherit; margin: 0; padding: 0; border: 0; }
.app { width: 1920px; height: 1080px; display: flex; flex-direction: column; }

/* title */
.titlebar { height: 29px; background: #fff; display: flex; align-items: center; padding-left: 2px; flex: none; }
.logo { width: 20px; height: 20px; margin-right: 5px; }
.logo-n { font: 700 13px "Noto Sans", sans-serif; fill: #167b85; }
.logo-m { font: 700 4px "Noto Sans", sans-serif; fill: #167b85; }
.title { font: 14px "Noto Sans", sans-serif; color: #111; white-space: nowrap; }
.winbtns { margin-left: auto; display: flex; align-items: center; padding-right: 25px; gap: 44px; }
.wb { width: 14px; height: 14px; }

/* menu */
.menubar { height: 26px; flex: none; display: flex; align-items: center; gap: 27.100px; padding: 0 0 1px 13px; background: linear-gradient(#555, #3e3e3e); border-top: 1px solid #4b4b4b; border-bottom: 1px solid #222; font-size: 13px; color: #f0f0f0; white-space: nowrap; }
.menu-right { margin-left: auto; display: flex; align-items: center; font-size: 12px; height: 22px; margin-top: 1px; }
.signin { width: 119px; height: 22px; background: #d0d0d0; color: #111; display: flex; align-items: center; padding: 0 5px; }
.signin-i { width: 16px; height: 18px; margin-right: 6px; }
.signin .tri { margin-left: auto; }
.ws-label { margin-left: 25px; width: 80px; color: #d8d8d8; }
.ws-drop { width: 164px; height: 22px; background: #5f5f5f; display: flex; align-items: center; padding: 0 6px 0 7px; color: #d8d8d8; margin-left: -2px; margin-right: 3px; }
.ws-drop .tri { margin-left: auto; }
.tri { width: 0; height: 0; border-left: 4px solid transparent; border-right: 4px solid transparent; border-top: 6px solid #d8d8d8; }
.tri-dark { border-top-color: #111; }

/* toolbar */
.toolbar { height: 41px; flex: none; background: #444; border-bottom: 1px solid #5a5a5a; display: flex; align-items: center; padding: 2px 0 0 3px; white-space: nowrap; position: relative; }
.grip { width: 2px; height: 30px; margin-right: 6px; border-left: 1px dotted #888; }
.ti { width: 40px; height: 36px; display: flex; align-items: center; justify-content: center; flex: none; }
.ti-on { width: 38px; background: #5b86c0; border-radius: 4px; margin-left: 2px; margin-right: 1px; }
.ic { width: 32px; height: 32px; overflow: visible; }
.sep { width: 7px; height: 24px; flex: none; position: relative; }
.sep::after { content: ""; position: absolute; left: 4px; top: 0; bottom: 0; width: 1px; background: #111; }
.gl { fill: #ccc; font-family: "Noto Sans", sans-serif; }
.gl-b { font-size: 34px; font-weight: 700; }
.gl-p { font-size: 26px; font-weight: 700; }
.gl-b2 { font-size: 26px; font-weight: 700; }
.tdrop { height: 22px; background: #5f5f5f; color: #cfcfcf; display: flex; align-items: center; justify-content: space-between; padding: 0 7px; margin-top: -10px; flex: none; border: 1px solid #555; }
.td-all { width: 86px; }
.td-view { width: 81px; margin-left: 5px; }
.td-set { width: 148px; margin-left: 2px; color: #c8c8c8; }

/* ribbon */
.rtabs { height: 24px; flex: none; background: #4f4f4f; border-bottom: 1px solid #2a2a2a; display: flex; align-items: flex-end; padding-left: 15px; font-size: 14px; color: #a5a5a5; white-space: nowrap; }
.rtab { height: 20px; display: flex; align-items: center; justify-content: center; flex: none; }
.rtab-on { width: 102px; height: 21px; padding-left: 16px; color: #c8c8c8; background: linear-gradient(#5d5d5d, #484848); border: 1px solid #2f2f2f; border-bottom: 0; border-radius: 3px 3px 0 0; }
.rt-1 { width: 118px; } .rt-2 { width: 116px; } .rt-3 { width: 138px; } .rt-4 { width: 112px; }
.rt-pill { width: 16px; height: 9px; background: #ddd; border-radius: 3px; margin: 0 0 7px 12px; }
.rt-caret { width: 0; height: 0; border-left: 3px solid transparent; border-right: 3px solid transparent; border-top: 4px solid #aaa; margin: 0 0 9px 8px; }
.rgroups { height: 24px; flex: none; background: linear-gradient(#3c3c3c, #444); border-bottom: 1px solid #2a2a2a; display: flex; gap: 1px; padding: 1px 0 0 13px; font-size: 14px; color: #d0d0d0; white-space: nowrap; }
.rgroups span { height: 22px; border: 1px solid #5a5a5a; display: flex; align-items: center; justify-content: center; flex: none; }
.rgroups span:nth-child(1) { width: 132px; }
.rgroups span:nth-child(2) { width: 124px; }
.rgroups span:nth-child(3) { width: 39px; }
.rgroups span:nth-child(4) { width: 109px; }
.rgroups span:nth-child(5) { width: 70px; }
.rgroups span:nth-child(6) { width: 51px; }
.rgroups span:nth-child(7) { width: 35px; }
.rgroups span:nth-child(8) { width: 89px; }
.rgroups span:nth-child(9) { width: 69px; }
.rgroups span:nth-child(10) { width: 47px; }
.rgroups span:nth-child(11) { width: 78px; }

/* main */
.main { height: 792px; flex: none; display: flex; }
.leftbar { width: 55px; flex: none; display: flex; flex-direction: column; }
.lb-dots { height: 2px; margin: 9px 8px 0 2px; border-top: 1px dotted #bbb; border-bottom: 1px dotted #888; }
.lb-body { width: 50px; flex: 1; margin-top: 6px; background: linear-gradient(#2a2a2a, #3c3c3c); border-right: 1px solid #222; display: flex; flex-direction: column; align-items: center; justify-content: flex-end; padding-bottom: 4px; }
.lb-play { width: 24px; height: 26px; background: #555; border-radius: 4px; display: flex; align-items: center; justify-content: center; margin-bottom: 13px; }
.lb-arrow { width: 0; height: 0; border-left: 7px solid #ddd; border-top: 5px solid transparent; border-bottom: 5px solid transparent; }
.lb-slot { width: 44px; height: 55px; margin-left: 6px; background: linear-gradient(#47628a, #4a8ad6); border-radius: 5px 0 0 5px; padding: 10px 3px 10px 4px; }
.lb-inner { width: 37px; height: 34px; background: linear-gradient(#5a5e66, #555a64); border: 1px solid #2c2c2c; border-radius: 2px; }

.vp { width: 1369px; height: 784px; margin-top: 6px; flex: none; border: 2px solid #7a6530; background: #363636; position: relative; overflow: hidden; }
.scene { width: 1365px; height: 780px; }
.wl path { fill: none; stroke: #fff; stroke-width: 1; vector-effect: non-scaling-stroke; }
.dk path { fill: none; stroke: #690000; stroke-width: 1; vector-effect: non-scaling-stroke; }
.gl-line path { fill: none; stroke: #8a8a8a; stroke-width: 1; vector-effect: non-scaling-stroke; }
.gz path, .gz rect { fill: none; stroke-width: 1; vector-effect: non-scaling-stroke; }
.gz-y { stroke: #e8d43a; } .gz-b { stroke: #1010d0; } .gz-g { stroke: #0c9a0c; } .gz-r { stroke: #c80808; } .gz-s { stroke: #aaa; }
.ax { font: 11px "Noto Sans", sans-serif; }
.ax-z { fill: #ffe838; font-weight: 700; } .ax-ty { fill: #177a17; } .ax-tx { fill: #a01f1f; }
.ta-b { stroke: #0a0ad0; fill: none; stroke-width: 1.500; } .ta-g { stroke: #0c9a0c; fill: none; stroke-dasharray: 2 1; } .ta-r { stroke: #d80808; fill: none; stroke-dasharray: 3 1; }
.tri-ax .ax { font-size: 13px; }
.ta-tz { fill: #1414c8; } .ta-ty { fill: #0c9a0c; } .ta-tx { fill: #c01818; }
.vc-t { font: 9px "Noto Sans", sans-serif; fill: #444; }
.vp-label { position: absolute; left: 3px; top: 5px; font-size: 13.800px; color: #c6c6c6; white-space: nowrap; }

/* command panel */
.cmd { width: 496px; flex: none; display: flex; flex-direction: column; padding-left: 5px; }
.dotline { height: 2px; margin: 8px 4px 0 2px; border-top: 1px dotted #bbb; border-bottom: 1px dotted #888; flex: none; }
.cmd-row { display: flex; flex: 1; min-height: 0; }
.cmd-left { width: 247px; flex: none; margin-top: 7px; display: flex; flex-direction: column; }
.tabs { height: 34px; display: flex; gap: 1px; flex: none; border-bottom: 1px solid #5c5c5c; }
.tab { width: 39px; height: 34px; background: #3e3e3e; border-radius: 5px 5px 0 0; display: flex; align-items: center; justify-content: center; }
.tab-on { background: #4c4c4c; border: 1px solid #555; border-bottom: 0; }
.tab-i { width: 24px; height: 24px; }
.cl-in { padding-left: 6px; }
.name-row { display: flex; gap: 7px; margin-top: 10px; }
.field { background: #5f5f5f; color: #dcdcdc; height: 22px; display: flex; align-items: center; padding: 0 3px; border: 1px solid #575757; }
.name { width: 209px; padding-bottom: 2px; }
.swatch { width: 21px; height: 22px; background: #f29ce0; border: 1px solid #1a1a1a; border-width: 1px 0 0 1px; }
.modlist { width: 239px; margin-top: 13px; justify-content: space-between; padding-right: 9px; }
.mods { margin: 16px 0 0 2px; display: flex; flex-direction: column; gap: 6px; }
.mrow { display: flex; gap: 6px; }
.mrow-6 { gap: 1px; }
.mrow-7 { margin-left: 15px; }
.b { display: flex; align-items: center; justify-content: center; height: 20px; background: #5f5f5f; color: #d6d6d6; border-radius: 3px; white-space: nowrap; font-size: 12px; }
.b.off { background: #545454; color: #8a8a8a; }
.b-m { width: 114px; height: 22px; }
.b-e { width: 94px; height: 22px; }
.stack { width: 239px; height: 185px; margin-top: 10px; border: 1px solid #f4f4f4; display: flex; background: #3f3f3f; overflow: hidden; }
.st-list { flex: 1; min-width: 0; overflow: hidden; font-size: 12px; color: #f0f0f0; }
.st-top, .st-head { height: 21px; display: flex; align-items: center; position: relative; }
.st-top { border-bottom: 1px solid #888; }
.st-line { border-top: 1px solid #888; height: 21px; }
.eye { width: 20px; height: 12px; margin-left: 5px; }
.st-name { margin-left: 25px; }
.st-tri { width: 0; height: 0; margin-left: 8px; border-left: 4px solid transparent; border-right: 4px solid transparent; border-top: 6px solid #ccc; }
.st-lab { margin-left: 9px; }
.st-box { width: 15px; height: 15px; background: #d0d0d0; border: 1px solid #333; margin-left: auto; margin-right: 5px; }
.st-sub { width: 14px; height: 14px; margin-left: auto; margin-right: 6px; }
.subs { margin-left: 36px; position: relative; }
.subs::after { content: ""; position: absolute; left: 0; top: -1px; bottom: 10px; border-left: 1px dotted #000; }
.sub { height: 21px; display: flex; align-items: center; padding-left: 21px; position: relative; }
.sub::before { content: ""; position: absolute; left: 0; top: 10px; width: 18px; border-top: 1px dotted #000; }
.sub span { padding-left: 2px; }
.st-sel { flex: 1; height: 21px; background: #5b86c0; display: flex; align-items: center; }
.st-scroll { width: 22px; flex: none; background: #f0f0f0; display: flex; flex-direction: column; }
.st-ar { width: 22px; height: 21px; }
.st-ar-b { margin-top: auto; }
.st-thumb { height: 54px; background: #cdcdcd; }
.stools { height: 28px; margin-top: 7px; display: flex; align-items: center; }
.sti { width: 24px; height: 24px; }
.st-pin { margin-left: 3px; }
.st-s1 { margin-left: 5px; }
.sti-on { width: 28px; height: 28px; background: #5b86c0; border-radius: 4px; display: flex; align-items: center; justify-content: center; margin-left: 3px; }
.st-s2 { margin-left: 3px; }
.st-uni { margin-left: 5px; }
.st-tr { margin-left: 7px; }
.st-s3 { margin-left: 6px; }
.st-cfg { margin-left: 4px; }
.divider { display: flex; align-items: center; margin: 17px 9px 0 10px; gap: 4px; height: 2px; }
.divider i { flex: 1; border-top: 1px solid #5f5f5f; }
.divider b { width: 12px; height: 3px; border-top: 1px dotted #ccc; border-bottom: 1px dotted #ccc; }

.epm-row { margin: 8px 0 0 5px; display: flex; gap: 5px; flex: 1; min-height: 0; }
.track { width: 6px; background: #3a3a3a; border-radius: 3px; flex: none; }
.roll { background: #505050; border-radius: 4px; border: 1px solid #474747; }
.rhead { height: 23px; display: flex; align-items: center; font-weight: 700; color: #f4f4f4; padding: 0 9px 4px 6px; flex: none; }
.rtri { width: 0; height: 0; border-left: 4px solid transparent; border-right: 4px solid transparent; border-top: 6px solid #b8b8b8; margin-right: 8px; }
.rgrip { width: 9px; height: 9px; margin-left: auto; background: radial-gradient(circle at 1px 1px, #a0a0a0 1px, transparent 1px) 0 0 / 3px 3px; }
.epm { width: 229px; height: 208px; }
.epm .rhead { height: 22px; padding-bottom: 0; }
.radios { display: flex; color: #e6e6e6; }
.rad { display: flex; align-items: center; gap: 8px; flex: none; }
.rad::before { content: ""; width: 14px; height: 14px; border-radius: 50%; background: #5f5f5f; flex: none; }
.rad-on::before { background: radial-gradient(circle, #eee 0 3.500px, #666 4.500px); }
.epm-r { margin: 8px 0 0 22px; height: 18px; }
.epm-r .rad { width: 98px; }
.nocur { height: 18px; margin-top: 5px; text-align: center; line-height: 18px; color: #e6e6e6; padding-right: 2px; }
.b-commit { width: 81px; height: 18px; margin: 6px 0 0 71px; }
.epm-b { display: flex; gap: 17px; margin: 12px 0 0 24px; }
.b-set { width: 79px; height: 18px; }
.b-can { width: 83px; height: 18px; }
.cage { height: 16px; margin: 8px 25px 0 21px; display: flex; align-items: center; color: #e6e6e6; }
.cb { width: 13px; height: 13px; background: #606060; border: 1px solid #474747; flex: none; }
.cb-s { width: 11px; height: 11px; margin-right: 4px; }
.sw { width: 16px; height: 16px; border: 1px solid #333; }
.sw-1 { margin-left: auto; background: #f8b90c; }
.sw-2 { margin-left: 13px; background: #e8e080; }

.cmd-right { width: 240px; flex: none; margin-top: 45px; display: flex; gap: 5px; }
.rolls { width: 228px; flex: none; display: flex; flex-direction: column; gap: 6px; }
.track-r { width: 7px; height: 735px; padding: 0 1px; }
.thumb { height: 231px; background: #555; border-radius: 3px; }
.r-sel { height: 339px; }
.r-pol { height: 259px; }
.r-geo { height: 121px; overflow: hidden; }
.levels { width: 150px; height: 28px; margin: 3px 0 0 29px; background: #3f3f3f; display: flex; justify-content: flex-start; padding-left: 1px; }
.lv { width: 28px; height: 28px; }
.levels .lv { margin-right: 2px; }
.lv-on { width: 28px; height: 28px; background: #5b86c0; border-radius: 4px; margin-right: 2px; }
.checks { margin: 4px 15px 0 18px; }
.chk { height: 24px; display: flex; align-items: center; gap: 3px; color: #e6e6e6; }
.spin { margin-left: auto; width: 105px; height: 18px; background: #565656; color: #8e8e8e; display: flex; align-items: center; justify-content: space-between; padding: 0 5px 0 3px; border: 1px solid #4a4a4a; }
.spin-a { width: 6px; height: 12px; background: linear-gradient(#999 0 45%, transparent 45% 55%, #999 55%); clip-path: polygon(50% 0, 100% 40%, 0 40%, 0 60%, 100% 60%, 50% 100%); }
.btns { margin-left: 14px; width: 196px; display: flex; flex-direction: column; gap: 8px; }
.btns-s { margin-top: 3px; }
.btns-p { margin-top: 8px; }
.br { display: flex; gap: 8px; }
.br-t { gap: 2px; }
.fl { flex: 1; }
.bw { width: 196px; }
.b-ring { width: 78px; margin-right: -4px; }
.b-loop { width: 74px; margin-right: -4px; }
.mini { width: 13px; height: 20px; background: #5c5c5c; border-radius: 2px; position: relative; margin-right: -1px; }
.mini::after { content: ""; position: absolute; left: 3px; top: 3px; width: 7px; height: 14px; background: #bbb; clip-path: polygon(50% 0, 100% 40%, 0 40%, 0 60%, 100% 60%, 50% 100%); }
.br .b-h { width: 74px; margin-right: -6px; }
.sq { width: 18px; flex: none; }
.sq i { width: 12px; height: 9px; border: 1px solid #000; border-top-width: 2px; }
.b-flip { outline: 1px dotted #d8d8d8; outline-offset: -2px; background: #555; }
.group { border: 1px solid #3a3a3a; border-radius: 3px; position: relative; }
.legend { position: absolute; left: 7px; top: -6px; background: #505050; padding: 0 1px; line-height: 14px; color: #e6e6e6; }
.g-prev { width: 211px; height: 40px; margin: 12px 0 0 5px; }
.prev-r { margin: 17px 0 0 2px; }
.prev-r .rad:nth-child(1) { width: 66px; }
.prev-r .rad:nth-child(2) { width: 82px; }
.count { margin: 6px 16px 0 0; text-align: right; color: #e6e6e6; height: 20px; line-height: 20px; }
.r-geo .b-rep { margin: 6px 0 0 14px; }
.g-con { width: 202px; height: 60px; margin: 8px 0 0 11px; }
.con-r { margin: 0 0 0 12px; height: 22px; align-items: center; }
.con-r:first-of-type { margin-top: 11px; }
.con-r .rad { width: 80px; }

/* bottom */
.bottom { height: 94px; flex: none; background: #464646; display: flex; white-space: nowrap; }
.b-left { width: 810px; flex: none; }
.slider { display: flex; gap: 2px; margin: 5px 0 0 12px; }
.sl-b { width: 18px; background: #5f5f5f; }
.sl-t { width: 154px; height: 20px; background: #5f5f5f; border-radius: 3px; text-align: center; line-height: 20px; color: #cfcfcf; }
.listener { display: flex; margin: 6px 0 0 4px; }
.ls-col { width: 122px; display: flex; flex-direction: column; gap: 1px; }
.ls-pink { height: 28px; background: #dbc3c3; border: 2px solid #bcbcbc; }
.ls-white { height: 29px; background: #fff; border: 2px solid #c8c8c8; font: 14px/20px "Liberation Mono", monospace; letter-spacing: .9px; color: #999; overflow: hidden; padding-left: 3px; }
.ls-sep { width: 1px; height: 62px; margin: -2px 0 0 4px; background: #111; }
.status { margin: 7px 0 0 6px; color: #f0f0f0; line-height: 18px; }
.b-coords { width: 540px; flex: none; }
.co-row { display: flex; align-items: center; height: 22px; margin-top: 35px; padding-left: 6px; }
.co-i1 { width: 18px; height: 18px; }
.co-i2 { width: 15px; height: 20px; margin-left: 17px; }
.co-i3 { width: 17px; height: 18px; margin-left: 17px; }
.co-l { width: 17px; color: #eee; }
.co-x { margin-left: 9px; }
.co-y { margin-left: 14px; width: 16px; }
.co-z { margin-left: 16px; width: 16px; }
.co-f { width: 72px; height: 22px; background: #545454; color: #8e8e8e; line-height: 22px; padding-left: 3px; border: 1px solid #3f3f3f; }
.co-f1 { width: 73px; }
.grid { margin-left: 17px; color: #eee; }
.tag-row { display: flex; align-items: center; height: 20px; margin-top: 10px; padding-left: 381px; color: #e6e6e6; }
.tag-sep { width: 1px; height: 20px; background: #111; }
.tag-i { width: 16px; height: 16px; margin: 0 11px 0 7px; }
.b-play { width: 169px; flex: none; }
.pl-row { display: flex; align-items: center; height: 22px; margin-top: 35px; padding-left: 10px; }
.pl-sep { width: 1px; height: 20px; background: #111; }
.pl-1 { width: 20px; height: 16px; }
.pl-s1 { margin-left: 5px; }
.pl-2 { width: 19px; height: 16px; margin-left: 6px; }
.pl-3 { width: 16px; height: 22px; margin-left: 10px; }
.pl-4 { width: 18px; height: 16px; margin-left: 11px; }
.pl-s2 { margin-left: 6px; }
.pl-5 { width: 18px; height: 16px; margin-left: 6px; }
.pl-row2 { display: flex; align-items: center; height: 20px; margin-top: 5px; padding-left: 12px; }
.pl-a { width: 16px; height: 14px; }
.pl-s3 { margin-left: 7px; }
.pl-f { width: 85px; height: 20px; margin-left: 2px; background: #5f5f5f; display: flex; align-items: center; justify-content: space-between; padding: 0 4px; color: #ccc; }
.pl-s4 { margin-left: 2px; }
.pl-t { width: 18px; height: 20px; margin-left: 6px; }
.b-key { width: 53px; height: 54px; margin-top: 33px; background: #5f5f5f; border-radius: 4px; flex: none; display: flex; align-items: center; justify-content: center; }
.key-i { width: 36px; height: 38px; }
.b-auto { width: 58px; margin: 33px 0 0 5px; flex: none; display: flex; flex-direction: column; gap: 2px; }
.b-auto .b { height: 25px; }
.b-sel { width: 143px; margin: 33px 0 0 5px; flex: none; }
.sel-d { width: 143px; justify-content: space-between; padding: 0 7px 0 8px; }
.sel-r { display: flex; align-items: center; margin-top: 6px; }
.sel-i { width: 24px; height: 24px; margin: 0 5px 0 2px; }
.b-fil { width: 110px; height: 25px; }
.b-nav { margin: 33px 0 0 11px; display: grid; grid-template-columns: repeat(4, 28px); grid-auto-rows: 26px; align-items: center; justify-items: center; }
.nv { width: 21px; height: 21px; }

/* taskbar */
.taskbar { height: 50px; flex: none; background: #1f2023; display: flex; align-items: stretch; color: #fff; }
.tk-start { width: 60px; display: flex; align-items: center; justify-content: center; flex: none; }
.win { width: 20px; height: 20px; }
.tk-search { width: 430px; flex: none; background: #f2f2f2; display: flex; align-items: center; color: #222; font: 16px "Noto Sans", sans-serif; }
.cortana { width: 26px; height: 26px; border: 4px solid #111; border-radius: 50%; margin: 0 12px 0 12px; }
.mic { width: 14px; height: 22px; margin-left: auto; margin-right: 18px; }
.tk { display: flex; align-items: center; justify-content: center; flex: none; position: relative; }
.tk-w60 { width: 60px; } .tk-w68 { width: 68px; } .tk-w56 { width: 56px; } .tk-w66 { width: 66px; } .tk-w64 { width: 64px; }
.tk-i { width: 28px; height: 28px; }
.tk-view { width: 24px; height: 18px; }
.tk-mail { width: 30px; height: 24px; }
.tk-run::after { content: ""; position: absolute; left: 5px; right: 4px; bottom: 0; height: 3px; background: #76b9ed; }
.tk-act { background: #4a4a4d; }
.tk-act::after { left: 0; right: 0; }
.tk-max { width: 30px; height: 30px; }
.logo-n2 { font: 700 20px "Noto Sans", sans-serif; fill: #167b85; }
.logo-m2 { font: 700 5px "Noto Sans", sans-serif; fill: #167b85; }
.tray { margin-left: auto; display: flex; align-items: stretch; padding-right: 27px; }
.tr { display: flex; align-items: center; justify-content: center; flex: none; }
.tr-48 { width: 48px; } .tr-56 { width: 56px; } .tr-36 { width: 36px; } .tr-22 { width: 22px; } .tr-40 { width: 40px; } .tr-24 { width: 24px; } .tr-18 { width: 18px; } .tr-28 { width: 28px; }
.tr-i { width: 18px; height: 18px; }
.tr-help { width: 30px; height: 30px; }
.help-q { font: 700 18px "Noto Sans", sans-serif; fill: #0c78d0; }
.clock { width: 116px; display: flex; flex-direction: column; align-items: center; justify-content: center; gap: 5px; font: 14px/18px "Noto Sans", sans-serif; }
```
